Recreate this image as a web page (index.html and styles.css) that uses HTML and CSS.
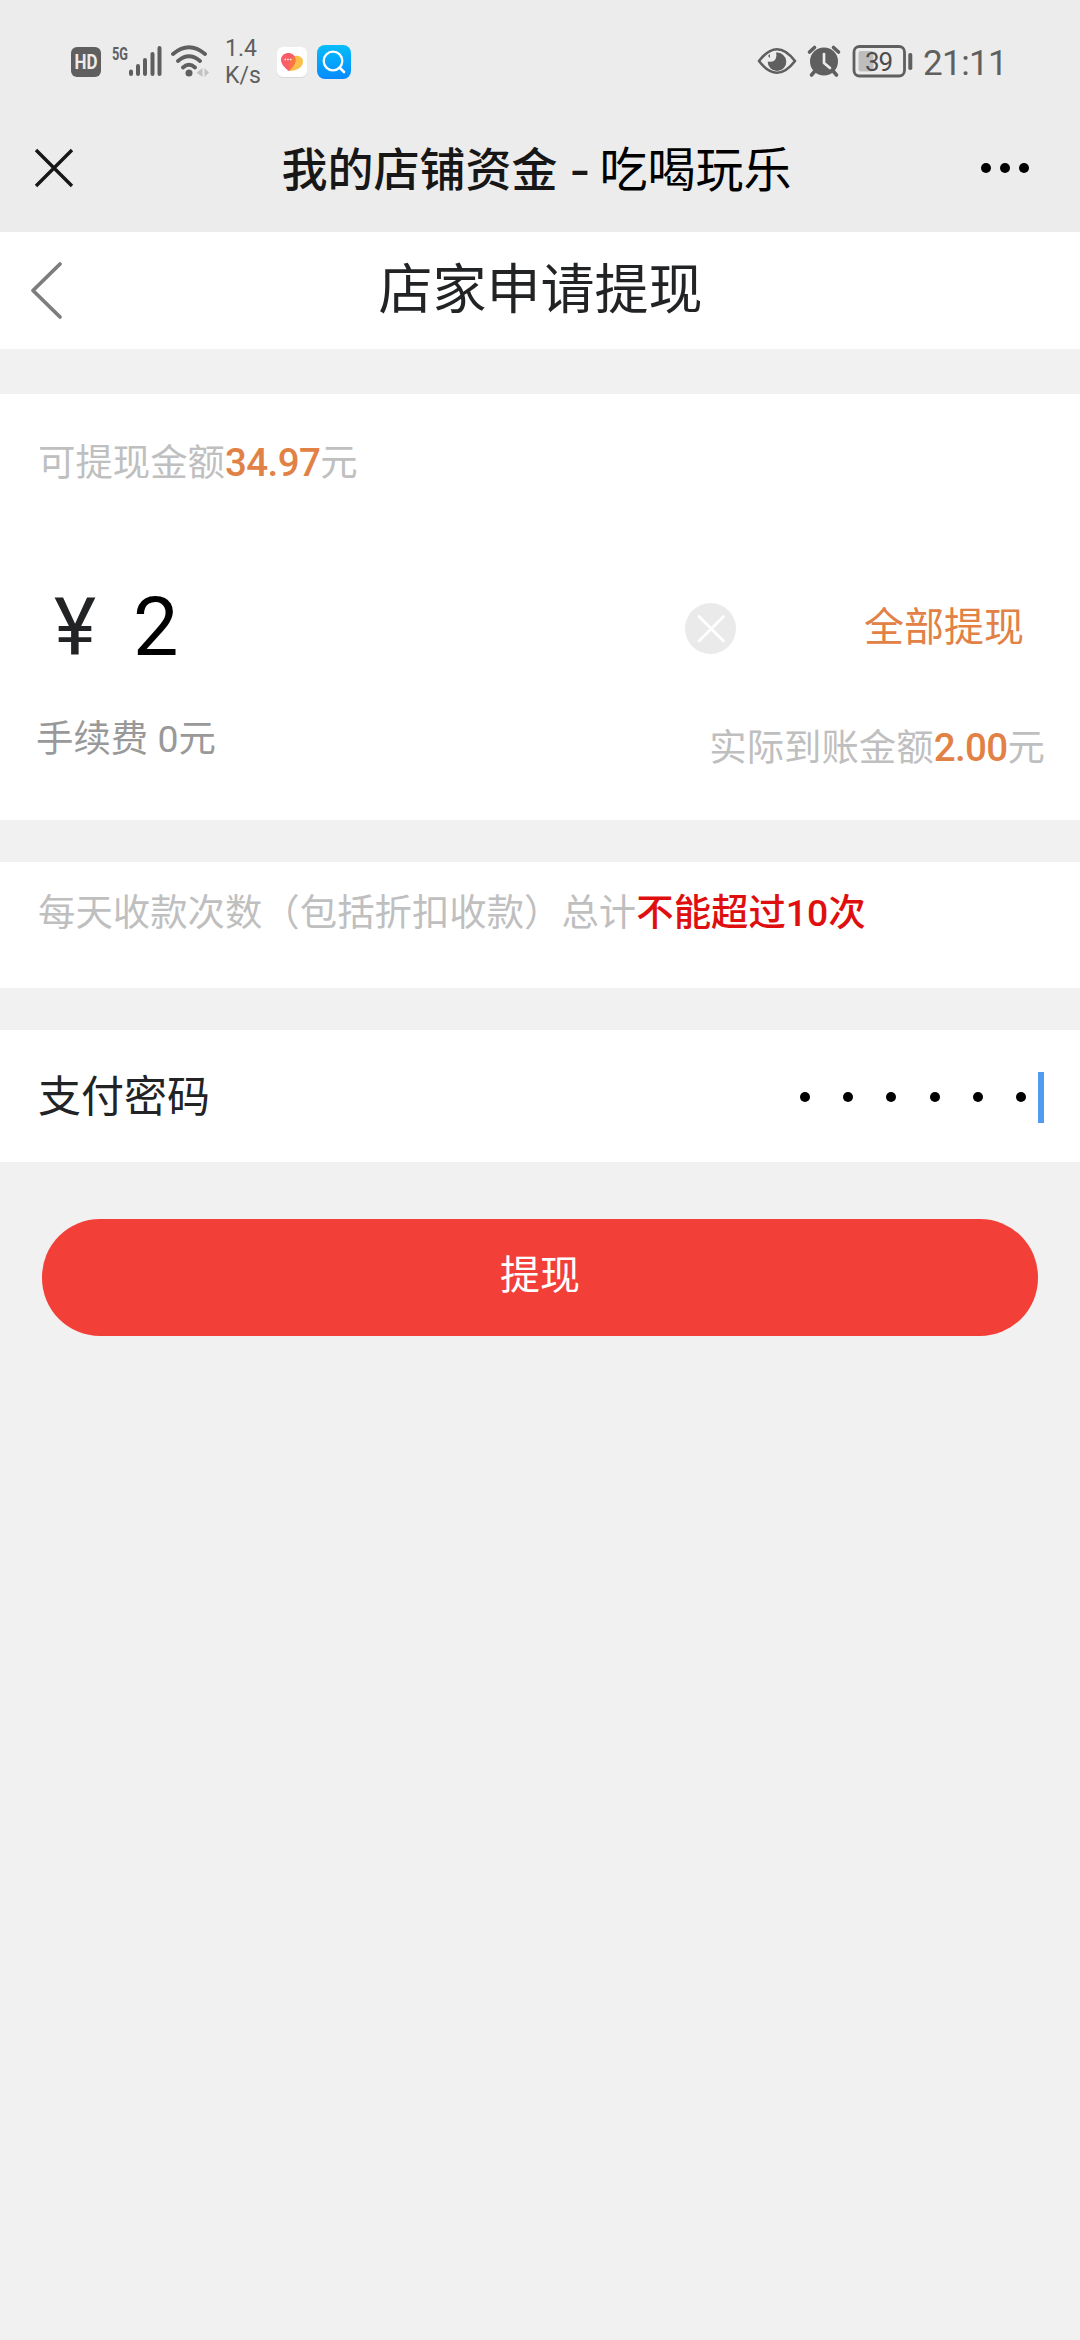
FILE: index.html
```html
<!DOCTYPE html>
<html lang="zh-CN">
<head>
<meta charset="utf-8">
<title>店家申请提现</title>
<link rel="stylesheet" href="styles.css">
</head>
<body>
<header class="system">
  <div class="status">
    <svg class="status-left" width="152" height="40" viewBox="66 42 152 40">
      <rect x="71" y="47" width="30" height="30" rx="6" fill="#5f5f5f"/>
      <text class="hd" x="86" y="69" text-anchor="middle" textLength="23" lengthAdjust="spacingAndGlyphs">HD</text>
      <text class="net" x="112" y="59.500" textLength="16" lengthAdjust="spacingAndGlyphs">5G</text>
      <path class="bars" d="M131 71.500V74M138 66V74M145 60V74M152.500 54V74M159.500 48V74"/>
      <path class="waves" d="M173 54Q189 40.500 205 54M178 61Q189 51.500 200 61M183 67.500Q189 62 195 67.500"/>
      <circle cx="189" cy="73" r="3.500" fill="#5f5f5f"/>
      <path d="M202.500 68v9l-6-4.500zM204.500 68v9l4.500-4.500z" fill="#c2c2c2"/>
    </svg>
    <div class="speed"><span>1.4</span><span>K/s</span></div>
    <svg class="apps" width="76" height="36" viewBox="276 43 76 36">
      <rect x="277" y="46.500" width="30" height="30.500" rx="6" fill="#d8d8d8"/>
      <rect x="277" y="46" width="30" height="30" rx="6" fill="#fff"/>
      <path d="M289 70C294 70 303 68 303 60.500C303 54 294 53 290 57z" fill="#fbc04c"/>
      <path d="M288.500 70C285 67 281 63 281 59C281 50 295.500 49.500 295.500 59C295.500 63 292 67 288.500 70z" fill="#fb5d68"/>
      <path d="M290 69C293 66 295.500 63 295.500 59Q295.500 57 294.500 55.500C290 58 288 63 290 69z" fill="#f9763f"/>
      <path d="M284.500 58.500h7" stroke="#fff" stroke-width="1.500" stroke-dasharray="1.500 1.200"/>
      <defs><linearGradient id="sky" x2="0" y2="1"><stop stop-color="#04bdf9"/><stop offset="1" stop-color="#078bff"/></linearGradient></defs>
      <rect x="317" y="44" width="34" height="34" rx="8" fill="url(#sky)"/>
      <circle cx="333" cy="60" r="9.300" fill="none" stroke="#fff" stroke-width="2.300"/>
      <path d="M339.500 66.500L344 71" stroke="#fff" stroke-width="2.600" stroke-linecap="round"/>
    </svg>
    <svg class="status-right" width="160" height="40" viewBox="755 42 160 40">
      <path d="M759 61Q777 37.500 795 61Q777 84.500 759 61z" fill="none" stroke="#5f5f5f" stroke-width="2.600" stroke-linejoin="round"/>
      <path d="M776 52.500A9.300 9.300 0 1 1 767.700 61.500Q774 63 776 58Q777 55 776 52.500zM768 56l2-2v4z" fill="#5f5f5f"/>
      <circle cx="824" cy="61.500" r="14" fill="#5f5f5f"/>
      <path d="M809.500 52l5-4.500M838.500 52l-5-4.500M815 71l-3.500 4M833 71l3.500 4" stroke="#5f5f5f" stroke-width="3.600" stroke-linecap="round"/>
      <path d="M824 54v9l6 5" fill="none" stroke="#ececec" stroke-width="2.700" stroke-linecap="round" stroke-linejoin="round"/>
      <rect x="854" y="46.500" width="50.500" height="29.500" rx="5.500" fill="none" stroke="#5f5f5f" stroke-width="2.800"/>
      <rect x="858.500" y="51" width="15" height="20.500" rx="2" fill="#bdbdbd"/>
      <text class="charge" x="878.500" y="70.500" text-anchor="middle">39</text>
      <rect x="908.300" y="53" width="4" height="17" rx="1.800" fill="#5f5f5f"/>
    </svg>
    <time class="clock">21:11</time>
  </div>
  <div class="webbar">
    <svg width="42" height="42" viewBox="0 0 42 42"><path d="M3 3L39 39M39 3L3 39" stroke="#171717" stroke-width="3.400"/></svg>
    <h1 class="webtitle"><span>我的店铺资金</span><span class="dash">-</span><span class="shop">吃喝玩乐</span></h1>
    <svg width="50" height="12" viewBox="0 0 50 12"><circle cx="6" cy="6" r="5"/><circle cx="25" cy="6" r="5"/><circle cx="44" cy="6" r="5"/></svg>
  </div>
</header>
<nav class="nav">
  <svg width="34" height="60" viewBox="0 0 34 60"><path d="M30 3L3 29.500L30 56" fill="none" stroke="#7d7d7d" stroke-width="3.800" stroke-linecap="round" stroke-linejoin="round"/></svg>
  <h2 class="navtitle">店家申请提现</h2>
</nav>
<main>
  <section class="card amount">
    <p class="hint">可提现金额<b>34.97</b>元</p>
    <div class="entry">
      <span class="yen">¥</span>
      <span class="value">2</span>
      <svg class="clear" width="51" height="51" viewBox="0 0 51 51"><circle cx="25.500" cy="25.500" r="25.500" fill="#eaeaea"/><path d="M14 13.500L38.500 38M38.500 13.500L14 38" stroke="#fff" stroke-width="2.800" stroke-linecap="round"/></svg>
      <a class="all">全部提现</a>
    </div>
    <div class="summary">
      <p class="fee">手续费 0元</p>
      <p class="hint actual">实际到账金额<b>2.00</b>元</p>
    </div>
  </section>
  <section class="card limit">
    <p class="hint">每天收款次数（包括折扣收款）总计<strong>不能超过10次</strong></p>
  </section>
  <section class="card password">
    <label class="label">支付密码</label>
    <div class="mask"><i></i><i></i><i></i><i></i><i></i><i></i><span class="caret"></span></div>
  </section>
  <button class="submit">提现</button>
</main>
</body>
</html>
```
FILE: styles.css
```css
* { box-sizing: border-box; margin: 0; }
body {
  width: 1080px;
  min-height: 2340px;
  background: #f1f1f1;
  color: #222325;
  font-family: Roboto, "Noto Sans CJK SC", sans-serif;
}
svg { display: block; flex: none; }

.system { height: 232px; background: #ececec; }
.status {
  display: flex;
  align-items: center;
  height: 124px;
  padding: 0 76px 0 66px;
  color: #5f5f5f;
}
.hd { font: 700 20px Roboto, sans-serif; fill: #ececec; }
.net { font: 700 18px Roboto, sans-serif; fill: #5f5f5f; }
.bars { fill: none; stroke: #5f5f5f; stroke-width: 4; stroke-linecap: round; }
.waves { fill: none; stroke: #5f5f5f; stroke-width: 3.8; stroke-linecap: round; }
.charge { font: 400 26px Roboto, sans-serif; fill: #4c4c4c; letter-spacing: -1px; }
.speed {
  display: flex;
  flex-direction: column;
  width: 58px;
  padding-left: 7px;
  font: 400 23px/27px Roboto, sans-serif;
}
.status-right { margin-left: auto; }
.clock {
  width: 81px;
  margin-left: 8px;
  padding-top: 3px;
  font-size: 35px;
  font-weight: 400;
  line-height: 40px;
  letter-spacing: -.6px;
  white-space: nowrap;
}

.webbar {
  display: flex;
  align-items: center;
  justify-content: space-between;
  height: 87px;
  padding: 0 50px 0 33px;
}
.webtitle {
  display: flex;
  align-items: center;
  width: 524px;
  margin-left: 32px;
  padding-top: 4px;
  color: #171717;
  font-size: 46px;
  font-weight: 500;
  line-height: 60px;
  white-space: nowrap;
}
.dash { width: 42px; padding-left: 3px; font-family: Inter, sans-serif; text-align: center; }
.shop { padding-top: 3px; color: #000; font-size: 48px; font-weight: 400; }

.nav { display: flex; align-items: center; height: 117px; padding-left: 30px; background: #fff; }
.navtitle { flex: 1; padding-right: 63px; text-align: center; font-size: 54px; font-weight: 400; line-height: 80px; }

.card { background: #fff; }
.hint { color: #bfbfbf; font-size: 37.4px; line-height: 56px; white-space: nowrap; }
.hint b { color: #e28145; font-size: 38.5px; font-weight: 500; line-height: 1; letter-spacing: -.6px; }
.hint strong { color: #e00f0f; font-weight: 500; }

.amount { height: 426px; margin-top: 45px; padding: 41px 35px 0 38px; }
.entry { display: flex; align-items: center; height: 120px; margin-top: 77px; }
.yen { width: 95px; padding-left: 16px; font-size: 80px; line-height: 120px; }
.value { flex: 1; color: #000; font-size: 81px; line-height: 120px; }
.all { width: 181px; margin-left: 128px; color: #e28145; font-size: 40px; line-height: 60px; white-space: nowrap; }
.summary { display: flex; justify-content: space-between; align-items: flex-start; margin-top: 23px; }
.fee { margin-left: -2px; color: #999; font-size: 37.4px; line-height: 56px; }
.actual { margin-top: 9px; }

.limit { height: 126px; margin-top: 42px; padding: 23px 38px; }
.password {
  display: flex;
  align-items: center;
  justify-content: space-between;
  height: 132px;
  margin-top: 42px;
  padding: 2px 36px 0 38px;
}
.label { font-size: 43px; line-height: 64px; }
.mask { display: flex; align-items: center; gap: 33.2px; }
.mask i { width: 10px; height: 10px; border-radius: 50%; background: #000; }
.caret { width: 6px; height: 51px; margin-left: -21.2px; background: #529bf0; }

.submit {
  display: block;
  width: 996px;
  height: 117px;
  margin: 57px auto 0;
  padding: 0 0 3px;
  border: 0;
  border-radius: 58px;
  background: #f24038;
  color: #fff;
  font: 400 40px/60px Roboto, "Noto Sans CJK SC", sans-serif;
}
```
